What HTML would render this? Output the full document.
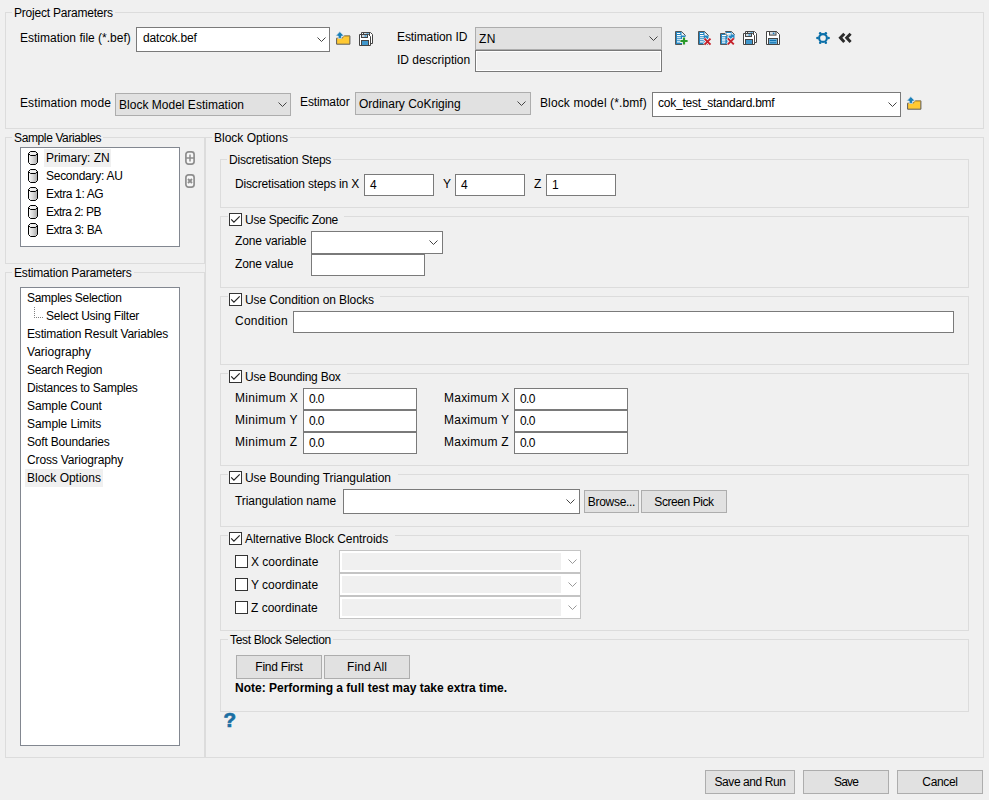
<!DOCTYPE html>
<html><head><meta charset="utf-8"><title>Block Options</title><style>
html,body{margin:0;padding:0}
body{width:989px;height:800px;background:#f0f0f0;position:relative;overflow:hidden;font-family:"Liberation Sans",sans-serif;font-size:12px;color:#000;line-height:16px}
.a{position:absolute;box-sizing:border-box}
.g{border:1px solid #dcdcdc}
.t{white-space:nowrap;height:16px}
.gl{background:#f0f0f0;white-space:nowrap;height:16px}
.in{background:#fff;border:1px solid #7a7a7a}
.lb{background:#fff;border:1px solid #828790}
.sel{background:#e1e1e1;border:1px solid #adadad}
.btn{background:#e1e1e1;border:1px solid #adadad;text-align:center;white-space:nowrap}
.cb{background:#fff;border:1px solid #333;width:13px;height:13px}
.dis{background:#fff;border:1px solid #c4c4c4}
.disf{background:#f0f0f0}
svg{position:absolute;overflow:visible}
</style></head><body>
<div class="a g" style="left:5px;top:12px;width:979px;height:117px;"></div>
<div class="a g" style="left:5px;top:137px;width:200px;height:127px;"></div>
<div class="a g" style="left:5px;top:272px;width:200px;height:486px;"></div>
<div class="a g" style="left:205px;top:137px;width:779px;height:621px;"></div>
<div class="a g" style="left:220px;top:159px;width:749px;height:49px;"></div>
<div class="a g" style="left:220px;top:216px;width:749px;height:72px;"></div>
<div class="a g" style="left:220px;top:296px;width:749px;height:69px;"></div>
<div class="a g" style="left:220px;top:373px;width:749px;height:93px;"></div>
<div class="a g" style="left:220px;top:474px;width:749px;height:53px;"></div>
<div class="a g" style="left:220px;top:535px;width:749px;height:96px;"></div>
<div class="a g" style="left:220px;top:639px;width:749px;height:73px;"></div>
<div class="a gl" style="left:12px;top:5px;padding:0 2px;letter-spacing:-0.211px;">Project Parameters</div>
<div class="a gl" style="left:12px;top:130px;padding:0 2px;letter-spacing:-0.377px;">Sample Variables</div>
<div class="a gl" style="left:12px;top:265px;padding:0 2px;letter-spacing:-0.185px;">Estimation Parameters</div>
<div class="a gl" style="left:212px;top:130px;padding:0 2px;letter-spacing:-0.008px;">Block Options</div>
<div class="a gl" style="left:227px;top:152px;padding:0 2px;letter-spacing:-0.194px;">Discretisation Steps</div>
<div class="a gl" style="left:228px;top:632px;padding:0 2px;letter-spacing:-0.324px;">Test Block Selection</div>
<div class="a " style="left:228px;top:210px;width:116px;height:16px;background:#f0f0f0;"></div>
<div class="a cb" style="left:229px;top:213px;width:13px;height:13px;"></div>
<svg style="left:229px;top:213px" width="13" height="13"><path d="M2.2 6.3 L4.9 9.1 L10.7 3.3" fill="none" stroke="#222" stroke-width="1.2"/></svg>
<div class="a t" style="left:245px;top:212px;letter-spacing:-0.259px;">Use Specific Zone</div>
<div class="a " style="left:228px;top:290px;width:152px;height:16px;background:#f0f0f0;"></div>
<div class="a cb" style="left:229px;top:293px;width:13px;height:13px;"></div>
<svg style="left:229px;top:293px" width="13" height="13"><path d="M2.2 6.3 L4.9 9.1 L10.7 3.3" fill="none" stroke="#222" stroke-width="1.2"/></svg>
<div class="a t" style="left:245px;top:292px;letter-spacing:-0.077px;">Use Condition on Blocks</div>
<div class="a " style="left:228px;top:367px;width:119px;height:16px;background:#f0f0f0;"></div>
<div class="a cb" style="left:229px;top:370px;width:13px;height:13px;"></div>
<svg style="left:229px;top:370px" width="13" height="13"><path d="M2.2 6.3 L4.9 9.1 L10.7 3.3" fill="none" stroke="#222" stroke-width="1.2"/></svg>
<div class="a t" style="left:245px;top:369px;letter-spacing:-0.237px;">Use Bounding Box</div>
<div class="a " style="left:228px;top:468px;width:170px;height:16px;background:#f0f0f0;"></div>
<div class="a cb" style="left:229px;top:471px;width:13px;height:13px;"></div>
<svg style="left:229px;top:471px" width="13" height="13"><path d="M2.2 6.3 L4.9 9.1 L10.7 3.3" fill="none" stroke="#222" stroke-width="1.2"/></svg>
<div class="a t" style="left:245px;top:470px;letter-spacing:-0.06px;">Use Bounding Triangulation</div>
<div class="a " style="left:228px;top:529px;width:167px;height:16px;background:#f0f0f0;"></div>
<div class="a cb" style="left:229px;top:532px;width:13px;height:13px;"></div>
<svg style="left:229px;top:532px" width="13" height="13"><path d="M2.2 6.3 L4.9 9.1 L10.7 3.3" fill="none" stroke="#222" stroke-width="1.2"/></svg>
<div class="a t" style="left:245px;top:531px;letter-spacing:-0.031px;">Alternative Block Centroids</div>
<div class="a t" style="left:20px;top:30px;letter-spacing:0.0029999999999999957px;">Estimation file (*.bef)</div>
<div class="a in" style="left:136px;top:27px;width:194px;height:25px;"></div>
<div class="a t" style="left:143px;top:30px;letter-spacing:-0.184px;">datcok.bef</div>
<svg style="left:317px;top:37px" width="10" height="6"><path d="M0.5 0.5 L4.5 4.5 L8.5 0.5" fill="none" stroke="#444" stroke-width="1"/></svg>
<div class="a t" style="left:397px;top:29px;letter-spacing:-0.088px;">Estimation ID</div>
<div class="a sel" style="left:475px;top:27px;width:187px;height:23px;"></div>
<div class="a t" style="left:479px;top:31px;letter-spacing:0.3px;">ZN</div>
<svg style="left:649px;top:36px" width="10" height="6"><path d="M0.5 0.5 L4.5 4.5 L8.5 0.5" fill="none" stroke="#444" stroke-width="1"/></svg>
<div class="a t" style="left:397px;top:52px;letter-spacing:-0.012px;">ID description</div>
<div class="a in" style="left:475px;top:50px;width:187px;height:22px;background:#f0f0f0;box-shadow:inset 0 0 0 1px #fff;"></div>
<div class="a t" style="left:20px;top:95px;letter-spacing:0.106px;">Estimation mode</div>
<div class="a sel" style="left:115px;top:93px;width:176px;height:23px;"></div>
<div class="a t" style="left:119px;top:97px;letter-spacing:0.014px;">Block Model Estimation</div>
<svg style="left:277.5px;top:102px" width="10" height="6"><path d="M0.5 0.5 L4.5 4.5 L8.5 0.5" fill="none" stroke="#444" stroke-width="1"/></svg>
<div class="a t" style="left:300px;top:94px;letter-spacing:-0.128px;">Estimator</div>
<div class="a sel" style="left:355px;top:92px;width:176px;height:23px;"></div>
<div class="a t" style="left:359px;top:96px;letter-spacing:-0.021px;">Ordinary CoKriging</div>
<svg style="left:517px;top:101px" width="10" height="6"><path d="M0.5 0.5 L4.5 4.5 L8.5 0.5" fill="none" stroke="#444" stroke-width="1"/></svg>
<div class="a t" style="left:540px;top:95px;letter-spacing:0.118px;">Block model (*.bmf)</div>
<div class="a in" style="left:652px;top:92px;width:249px;height:25px;"></div>
<div class="a t" style="left:658px;top:95px;letter-spacing:-0.235px;">cok_test_standard.bmf</div>
<svg style="left:887.5px;top:102px" width="10" height="6"><path d="M0.5 0.5 L4.5 4.5 L8.5 0.5" fill="none" stroke="#444" stroke-width="1"/></svg>
<div class="a lb" style="left:20px;top:147px;width:160px;height:100px;"></div>
<div class="a " style="left:44px;top:149px;width:67px;height:18px;background:#f0f0f0;"></div>
<svg width="0" height="0" style="left:0;top:0"><defs><linearGradient id="cy" x1="0" x2="1" y1="0" y2="0"><stop offset="0" stop-color="#fbfbfb"/><stop offset="0.45" stop-color="#dcdcdc"/><stop offset="1" stop-color="#a9a9a9"/></linearGradient></defs></svg>
<svg style="left:28px;top:151px" width="10" height="14" viewBox="0 0 10 14"><path d="M2.5 0.5 H7.5 L9.5 2.5 V11.5 L7.5 13.5 H2.5 L0.5 11.5 V2.5 Z" fill="url(#cy)" stroke="#000" stroke-width="1"/><path d="M0.5 2.5 L2.5 4.5 H7.5 L9.5 2.5" fill="none" stroke="#000" stroke-width="1"/><path d="M2.7 1.2 H7.3 L8.6 2.5 L7.3 3.8 H2.7 L1.4 2.5 Z" fill="#f2f2f2"/></svg>
<div class="a t" style="left:46px;top:150px;letter-spacing:-0.03px;">Primary: ZN</div>
<svg style="left:28px;top:169px" width="10" height="14" viewBox="0 0 10 14"><path d="M2.5 0.5 H7.5 L9.5 2.5 V11.5 L7.5 13.5 H2.5 L0.5 11.5 V2.5 Z" fill="url(#cy)" stroke="#000" stroke-width="1"/><path d="M0.5 2.5 L2.5 4.5 H7.5 L9.5 2.5" fill="none" stroke="#000" stroke-width="1"/><path d="M2.7 1.2 H7.3 L8.6 2.5 L7.3 3.8 H2.7 L1.4 2.5 Z" fill="#f2f2f2"/></svg>
<div class="a t" style="left:46px;top:168px;letter-spacing:-0.268px;">Secondary: AU</div>
<svg style="left:28px;top:187px" width="10" height="14" viewBox="0 0 10 14"><path d="M2.5 0.5 H7.5 L9.5 2.5 V11.5 L7.5 13.5 H2.5 L0.5 11.5 V2.5 Z" fill="url(#cy)" stroke="#000" stroke-width="1"/><path d="M0.5 2.5 L2.5 4.5 H7.5 L9.5 2.5" fill="none" stroke="#000" stroke-width="1"/><path d="M2.7 1.2 H7.3 L8.6 2.5 L7.3 3.8 H2.7 L1.4 2.5 Z" fill="#f2f2f2"/></svg>
<div class="a t" style="left:46px;top:186px;letter-spacing:-0.37px;">Extra 1: AG</div>
<svg style="left:28px;top:205px" width="10" height="14" viewBox="0 0 10 14"><path d="M2.5 0.5 H7.5 L9.5 2.5 V11.5 L7.5 13.5 H2.5 L0.5 11.5 V2.5 Z" fill="url(#cy)" stroke="#000" stroke-width="1"/><path d="M0.5 2.5 L2.5 4.5 H7.5 L9.5 2.5" fill="none" stroke="#000" stroke-width="1"/><path d="M2.7 1.2 H7.3 L8.6 2.5 L7.3 3.8 H2.7 L1.4 2.5 Z" fill="#f2f2f2"/></svg>
<div class="a t" style="left:46px;top:204px;letter-spacing:-0.53px;">Extra 2: PB</div>
<svg style="left:28px;top:223px" width="10" height="14" viewBox="0 0 10 14"><path d="M2.5 0.5 H7.5 L9.5 2.5 V11.5 L7.5 13.5 H2.5 L0.5 11.5 V2.5 Z" fill="url(#cy)" stroke="#000" stroke-width="1"/><path d="M0.5 2.5 L2.5 4.5 H7.5 L9.5 2.5" fill="none" stroke="#000" stroke-width="1"/><path d="M2.7 1.2 H7.3 L8.6 2.5 L7.3 3.8 H2.7 L1.4 2.5 Z" fill="#f2f2f2"/></svg>
<div class="a t" style="left:46px;top:222px;letter-spacing:-0.45px;">Extra 3: BA</div>
<svg style="left:185px;top:151px" width="10" height="14" viewBox="0 0 10 14"><rect x="0.9" y="0.9" width="8.2" height="12.2" rx="2.6" fill="#f7f7f7" stroke="#8e8e8e" stroke-width="1.7"/><path d="M5 3.6 V10.4 M1 7 H9" stroke="#8e8e8e" stroke-width="1.5" fill="none"/></svg>
<svg style="left:185px;top:174px" width="10" height="14" viewBox="0 0 10 14"><rect x="0.9" y="0.9" width="8.2" height="12.2" rx="2.6" fill="#f7f7f7" stroke="#8e8e8e" stroke-width="1.7"/><path d="M3 5 L7 9 M7 5 L3 9" stroke="#8e8e8e" stroke-width="1.9" fill="none"/></svg>
<div class="a lb" style="left:20px;top:287px;width:160px;height:459px;"></div>
<div class="a " style="left:25px;top:469px;width:78px;height:18px;background:#f0f0f0;"></div>
<div class="a t" style="left:27px;top:290px;letter-spacing:-0.279px;">Samples Selection</div>
<div class="a t" style="left:46px;top:308px;letter-spacing:-0.222px;">Select Using Filter</div>
<div class="a t" style="left:27px;top:326px;letter-spacing:-0.181px;">Estimation Result Variables</div>
<div class="a t" style="left:27px;top:344px;letter-spacing:0.01999999999999999px;">Variography</div>
<div class="a t" style="left:27px;top:362px;letter-spacing:-0.328px;">Search Region</div>
<div class="a t" style="left:27px;top:380px;letter-spacing:-0.274px;">Distances to Samples</div>
<div class="a t" style="left:27px;top:398px;letter-spacing:-0.105px;">Sample Count</div>
<div class="a t" style="left:27px;top:416px;letter-spacing:-0.088px;">Sample Limits</div>
<div class="a t" style="left:27px;top:434px;letter-spacing:-0.184px;">Soft Boundaries</div>
<div class="a t" style="left:27px;top:452px;letter-spacing:-0.139px;">Cross Variography</div>
<div class="a t" style="left:27px;top:470px;letter-spacing:-0.008px;">Block Options</div>
<svg style="left:34px;top:307px" width="10" height="12"><path d="M0.5 0 V11 M0 10.5 H9" fill="none" stroke="#808080" stroke-width="1" stroke-dasharray="1 1" shape-rendering="crispEdges"/></svg>
<div class="a t" style="left:235px;top:176px;letter-spacing:-0.159px;">Discretisation steps in X</div>
<div class="a in" style="left:364px;top:174px;width:70px;height:22px;"></div>
<div class="a t" style="left:370px;top:177px;">4</div>
<div class="a t" style="left:443px;top:176px;">Y</div>
<div class="a in" style="left:455px;top:174px;width:70px;height:22px;"></div>
<div class="a t" style="left:461px;top:177px;">4</div>
<div class="a t" style="left:534px;top:176px;">Z</div>
<div class="a in" style="left:546px;top:174px;width:70px;height:22px;"></div>
<div class="a t" style="left:552px;top:177px;">1</div>
<div class="a t" style="left:235px;top:233px;letter-spacing:-0.10799999999999998px;">Zone variable</div>
<div class="a in" style="left:311px;top:231px;width:132px;height:23px;"></div>
<svg style="left:429px;top:240px" width="10" height="6"><path d="M0.5 0.5 L4.5 4.5 L8.5 0.5" fill="none" stroke="#444" stroke-width="1"/></svg>
<div class="a t" style="left:235px;top:256px;letter-spacing:-0.11399999999999999px;">Zone value</div>
<div class="a in" style="left:311px;top:254px;width:114px;height:22px;"></div>
<div class="a t" style="left:235px;top:313px;letter-spacing:0.242px;">Condition</div>
<div class="a in" style="left:293px;top:311px;width:661px;height:22px;"></div>
<div class="a t" style="left:235px;top:390px;letter-spacing:0.343px;">Minimum X</div>
<div class="a in" style="left:303px;top:388px;width:114px;height:22px;"></div>
<div class="a t" style="left:309px;top:391px;letter-spacing:-0.6px;">0.0</div>
<div class="a t" style="left:444px;top:390px;letter-spacing:0.23299999999999998px;">Maximum X</div>
<div class="a in" style="left:514px;top:388px;width:114px;height:22px;"></div>
<div class="a t" style="left:520px;top:391px;letter-spacing:-0.6px;">0.0</div>
<div class="a t" style="left:235px;top:412px;letter-spacing:0.343px;">Minimum Y</div>
<div class="a in" style="left:303px;top:410px;width:114px;height:22px;"></div>
<div class="a t" style="left:309px;top:413px;letter-spacing:-0.6px;">0.0</div>
<div class="a t" style="left:444px;top:412px;letter-spacing:0.23299999999999998px;">Maximum Y</div>
<div class="a in" style="left:514px;top:410px;width:114px;height:22px;"></div>
<div class="a t" style="left:520px;top:413px;letter-spacing:-0.6px;">0.0</div>
<div class="a t" style="left:235px;top:434px;letter-spacing:0.343px;">Minimum Z</div>
<div class="a in" style="left:303px;top:432px;width:114px;height:22px;"></div>
<div class="a t" style="left:309px;top:435px;letter-spacing:-0.6px;">0.0</div>
<div class="a t" style="left:444px;top:434px;letter-spacing:0.23299999999999998px;">Maximum Z</div>
<div class="a in" style="left:514px;top:432px;width:114px;height:22px;"></div>
<div class="a t" style="left:520px;top:435px;letter-spacing:-0.6px;">0.0</div>
<div class="a t" style="left:235px;top:493px;letter-spacing:-0.071px;">Triangulation name</div>
<div class="a in" style="left:343px;top:489px;width:237px;height:25px;"></div>
<svg style="left:566px;top:499px" width="10" height="6"><path d="M0.5 0.5 L4.5 4.5 L8.5 0.5" fill="none" stroke="#444" stroke-width="1"/></svg>
<div class="a btn" style="left:584px;top:490px;width:55px;height:23px;line-height:21px;padding-top:1px;letter-spacing:-0.307px;">Browse...</div>
<div class="a btn" style="left:641px;top:490px;width:86px;height:23px;line-height:21px;padding-top:1px;letter-spacing:-0.43px;">Screen Pick</div>
<div class="a cb" style="left:235px;top:555px;width:13px;height:13px;"></div>
<div class="a t" style="left:251px;top:554px;letter-spacing:-0.0050000000000000044px;">X coordinate</div>
<div class="a dis" style="left:339px;top:550px;width:242px;height:23px;"></div>
<div class="a disf" style="left:342px;top:553px;width:219px;height:17px;"></div>
<svg style="left:568px;top:559px" width="10" height="6"><path d="M0.5 0.5 L4.5 4.5 L8.5 0.5" fill="none" stroke="#9a9a9a" stroke-width="1"/></svg>
<div class="a cb" style="left:235px;top:578px;width:13px;height:13px;"></div>
<div class="a t" style="left:251px;top:577px;letter-spacing:-0.0050000000000000044px;">Y coordinate</div>
<div class="a dis" style="left:339px;top:573px;width:242px;height:23px;"></div>
<div class="a disf" style="left:342px;top:576px;width:219px;height:17px;"></div>
<svg style="left:568px;top:582px" width="10" height="6"><path d="M0.5 0.5 L4.5 4.5 L8.5 0.5" fill="none" stroke="#9a9a9a" stroke-width="1"/></svg>
<div class="a cb" style="left:235px;top:601px;width:13px;height:13px;"></div>
<div class="a t" style="left:251px;top:600px;letter-spacing:-0.0050000000000000044px;">Z coordinate</div>
<div class="a dis" style="left:339px;top:596px;width:242px;height:23px;"></div>
<div class="a disf" style="left:342px;top:599px;width:219px;height:17px;"></div>
<svg style="left:568px;top:605px" width="10" height="6"><path d="M0.5 0.5 L4.5 4.5 L8.5 0.5" fill="none" stroke="#9a9a9a" stroke-width="1"/></svg>
<div class="a btn" style="left:236px;top:655px;width:86px;height:24px;line-height:22px;letter-spacing:-0.274px;">Find First</div>
<div class="a btn" style="left:324px;top:655px;width:86px;height:24px;line-height:22px;letter-spacing:0.071px;">Find All</div>
<div class="a t" style="left:235px;top:680px;"><b>Note: Performing a full test may take extra time.</b></div>
<svg style="left:222px;top:711px" width="18" height="18" viewBox="0 0 18 18"><text x="1.6" y="15.9" font-family="Liberation Sans, sans-serif" font-weight="bold" font-size="19.5" fill="#1b6fa3" stroke="#1b6fa3" stroke-width="0.7" textLength="12.6" lengthAdjust="spacingAndGlyphs">?</text></svg>
<div class="a btn" style="left:705px;top:770px;width:90px;height:24px;line-height:22px;letter-spacing:-0.425px;">Save and Run</div>
<div class="a btn" style="left:803px;top:770px;width:86px;height:24px;line-height:22px;letter-spacing:-0.833px;">Save</div>
<div class="a btn" style="left:897px;top:770px;width:86px;height:24px;line-height:22px;letter-spacing:-0.34px;">Cancel</div>
<svg style="left:336px;top:31px" width="15" height="14" viewBox="0 0 15 14"><path d="M0.6 7.2 H6.2 L7.8 4.9 H13.9 V13.2 H0.6 Z" fill="#ffc933" stroke="#5a5a5a" stroke-width="1"/><path d="M0.9 7.4 H6.4 L8 5.2 H13.6" fill="none" stroke="#e0a820" stroke-width="0.8"/><path d="M3.8 0.6 L8.2 5 H5.6 V7.4 H2.2 V5 H-0.4 Z" fill="#1b7fb8" stroke="#f0f0f0" stroke-width="0.7"/></svg>
<svg style="left:359px;top:32px" width="15" height="15" viewBox="0 0 15 15"><path d="M2.5 0.5 H11.5 L13.5 2.5 V11.5 H2.5 Z" fill="#fff" stroke="#444" stroke-width="1"/><rect x="4.5" y="0.5" width="6" height="3" fill="#cfd8de" stroke="#444" stroke-width="1"/><rect x="7.5" y="1" width="2" height="2" fill="#5aa7d6"/><rect x="4.5" y="6.5" width="7" height="5" fill="#3f97cc" stroke="#444" stroke-width="1"/><path d="M0.5 2.5 H9.5 L11.5 4.5 V13.5 H0.5 Z" fill="#fff" stroke="#444" stroke-width="1"/><rect x="2.5" y="2.5" width="6" height="3" fill="#cfd8de" stroke="#444" stroke-width="1"/><rect x="5.5" y="3" width="2" height="2" fill="#5aa7d6"/><rect x="2.5" y="8.5" width="7" height="5" fill="#3f97cc" stroke="#444" stroke-width="1"/></svg>
<svg style="left:675px;top:31px" width="15" height="15" viewBox="0 0 15 15"><path d="M0.5 0.5 H6.5 L10.5 4.5 V13.5 H0.5 Z" fill="#2386c2"/><path d="M6.5 0.9 V4.5 H10.2 Z" fill="#f4f6f8"/><path d="M10.5 13.5 H0.5 V0.5 H6.5 L10.5 4.5" fill="none" stroke="#555" stroke-width="1"/><path d="M2 2.50 H5.20 M2 4.60 H5.80 M2 6.70 H5.80 M2 8.80 H5.80 M2 10.90 H5.80 " stroke="#fff" stroke-width="1.1"/><path d="M5 10 H13 M9 6 V14" stroke="#f0f0f0" stroke-width="4"/><path d="M5.4 10 H12.6 M9 6.4 V13.6" stroke="#2a9a2a" stroke-width="2.2"/></svg>
<svg style="left:698px;top:31px" width="15" height="15" viewBox="0 0 15 15"><path d="M0.5 0.5 H6.5 L10.5 4.5 V13.5 H0.5 Z" fill="#2386c2"/><path d="M6.5 0.9 V4.5 H10.2 Z" fill="#f4f6f8"/><path d="M10.5 13.5 H0.5 V0.5 H6.5 L10.5 4.5" fill="none" stroke="#555" stroke-width="1"/><path d="M2 2.50 H5.20 M2 4.60 H5.80 M2 6.70 H5.80 M2 8.80 H5.80 M2 10.90 H5.80 " stroke="#fff" stroke-width="1.1"/><path d="M6.3 7.3999999999999995 L12.7 13.8 M12.7 7.3999999999999995 L6.3 13.8" stroke="#f0f0f0" stroke-width="3.6"/><path d="M6.5 7.6 L12.5 13.6 M12.5 7.6 L6.5 13.6" stroke="#c4202a" stroke-width="1.9"/></svg>
<svg style="left:719px;top:31px" width="17" height="15" viewBox="0 0 17 15"><path d="M6.5 0.5 H12.5 L15.5 3.5 V8.5 H6.5 Z" fill="#2386c2"/><path d="M12.5 0.9 V3.5 H15.2 Z" fill="#f4f6f8"/><path d="M15.5 8.5 H6.5 V0.5 H12.5 L15.5 3.5" fill="none" stroke="#555" stroke-width="1"/><path d="M8 2.50 H11.80 M8 3.85 H11.80 " stroke="#fff" stroke-width="1.1"/><path d="M0.3 1.3 H6.5 L9.6 4.4 V15 H0.3 Z" fill="#f0f0f0"/><path d="M1.5 2.5 H6.0 L8.5 5.0 V13.5 H1.5 Z" fill="#2386c2"/><path d="M6.0 2.9 V5.0 H8.2 Z" fill="#f4f6f8"/><path d="M8.5 13.5 H1.5 V2.5 H6.0 L8.5 5.0" fill="none" stroke="#555" stroke-width="1"/><path d="M3 4.50 H6.40 M3 6.30 H6.40 M3 8.10 H6.40 M3 9.90 H6.40 M3 11.70 H6.40 " stroke="#fff" stroke-width="1.1"/><path d="M8.600000000000001 7.2 L15.0 13.600000000000001 M15.0 7.2 L8.600000000000001 13.600000000000001" stroke="#f0f0f0" stroke-width="3.6"/><path d="M8.8 7.4 L14.8 13.4 M14.8 7.4 L8.8 13.4" stroke="#c4202a" stroke-width="1.9"/></svg>
<svg style="left:743px;top:31px" width="15" height="15" viewBox="0 0 15 15"><path d="M2.5 0.5 H11.5 L13.5 2.5 V11.5 H2.5 Z" fill="#fff" stroke="#444" stroke-width="1"/><rect x="4.5" y="0.5" width="6" height="3" fill="#cfd8de" stroke="#444" stroke-width="1"/><rect x="7.5" y="1" width="2" height="2" fill="#5aa7d6"/><rect x="4.5" y="6.5" width="7" height="5" fill="#3f97cc" stroke="#444" stroke-width="1"/><path d="M0.5 2.5 H9.5 L11.5 4.5 V13.5 H0.5 Z" fill="#fff" stroke="#444" stroke-width="1"/><rect x="2.5" y="2.5" width="6" height="3" fill="#cfd8de" stroke="#444" stroke-width="1"/><rect x="5.5" y="3" width="2" height="2" fill="#5aa7d6"/><rect x="2.5" y="8.5" width="7" height="5" fill="#3f97cc" stroke="#444" stroke-width="1"/></svg>
<svg style="left:766px;top:31px" width="15" height="15" viewBox="0 0 15 15"><path d="M0.5 0.5 H10.5 L13.5 3.5 V13.5 H0.5 Z" fill="#fff" stroke="#444" stroke-width="1"/><rect x="3.5" y="0.5" width="6.5" height="3.6" fill="#d5dbe0" stroke="#444" stroke-width="1"/><rect x="6.8" y="1.6" width="1.6" height="1.6" fill="#1677b7"/><rect x="2.5" y="7.5" width="9" height="6" fill="#6ab2dc" stroke="#444" stroke-width="1"/><path d="M3.8 9.5 H10.2 M3.8 11.7 H10.2" stroke="#0f72b0" stroke-width="1.1"/></svg>
<svg style="left:816px;top:31px" width="14" height="14" viewBox="0 0 14 14"><circle cx="7" cy="7" r="3.9" fill="none" stroke="#0b6fa8" stroke-width="2.1"/><circle cx="12.60" cy="7.00" r="1.25" fill="#0b6fa8"/><circle cx="9.80" cy="11.85" r="1.25" fill="#0b6fa8"/><circle cx="4.20" cy="11.85" r="1.25" fill="#0b6fa8"/><circle cx="1.40" cy="7.00" r="1.25" fill="#0b6fa8"/><circle cx="4.20" cy="2.15" r="1.25" fill="#0b6fa8"/><circle cx="9.80" cy="2.15" r="1.25" fill="#0b6fa8"/></svg>
<svg style="left:838px;top:31px" width="15" height="14" viewBox="0 0 15 14"><path d="M6.3 2.7 L2.4 6.8 L6.3 10.9 M12.6 2.7 L8.7 6.8 L12.6 10.9" fill="none" stroke="#2b2b2b" stroke-width="2.9" stroke-linejoin="miter"/></svg>
<svg style="left:907px;top:96px" width="15" height="14" viewBox="0 0 15 14"><path d="M0.6 7.2 H6.2 L7.8 4.9 H13.9 V13.2 H0.6 Z" fill="#ffc933" stroke="#5a5a5a" stroke-width="1"/><path d="M0.9 7.4 H6.4 L8 5.2 H13.6" fill="none" stroke="#e0a820" stroke-width="0.8"/><path d="M3.8 0.6 L8.2 5 H5.6 V7.4 H2.2 V5 H-0.4 Z" fill="#1b7fb8" stroke="#f0f0f0" stroke-width="0.7"/></svg>
</body></html>
